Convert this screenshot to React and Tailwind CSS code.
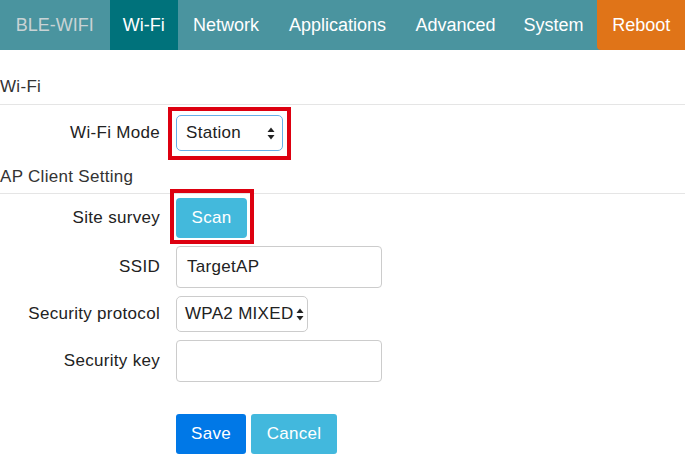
const tabs = [
  { label: "Wi-Fi", w: "w-[69px]", active: true },
  { label: "Network", w: "w-[96px]" },
  { label: "Applications", w: "w-[128px]" },
  { label: "Advanced", w: "w-[109px]" },
  { label: "System", w: "w-[88px]" },
];

function Arrows() {
  return (
    <svg width="8" height="13" viewBox="0 0 8 13" className="shrink-0">
      <path d="M4 0.5 L7.5 5 L0.5 5 Z" fill="#222" />
      <path d="M4 12.5 L7.5 8 L0.5 8 Z" fill="#222" />
    </svg>
  );
}

function Legend({ children, className }) {
  return (
    <div className={`border-b border-[#e5e5e5] text-[17px] leading-[20px] text-[#333] ${className}`}>
      {children}
    </div>
  );
}

function Row({ label, children, className = "" }) {
  return (
    <div className={`flex items-center ${className}`}>
      <div className="w-[160px] whitespace-nowrap text-right text-[#222]">{label}</div>
      <div className="ml-[16px] flex items-center">{children}</div>
    </div>
  );
}

function Marked({ children, box }) {
  return (
    <div className="relative">
      {children}
      <span className={`pointer-events-none absolute border-[4px] border-[#dd0010] ${box}`} />
    </div>
  );
}

export default function App() {
  return (
    <div className="h-[465px] w-[685px] overflow-hidden bg-white font-['Liberation_Sans',Arial,sans-serif]">
      <nav className="flex h-[50px] bg-[#4a949f] text-[18px] text-white">
        <div className="flex w-[110px] items-center justify-center text-[#c9d3d5]">BLE-WIFI</div>
        {tabs.map((t) => (
          <div
            key={t.label}
            className={`flex ${t.w} items-center justify-center ${t.active ? "bg-[#00727b]" : ""}`}
          >
            {t.label}
          </div>
        ))}
        <div className="flex w-[88px] items-center pl-[15px] rounded-bl-[4px] bg-[#e07418]">Reboot</div>
      </nav>

      <div className="text-[17px] tracking-[0.3px]">
        <Legend className="pt-[27px] pb-[7px]">Wi-Fi</Legend>

        <Row label="Wi-Fi Mode" className="mt-[10px]">
          <Marked box="-left-[8px] -right-[8px] -top-[8px] -bottom-[9px]">
            <div className="flex h-[36px] w-[107px] items-center justify-between rounded-[5px] border border-[#66afe9] pl-[9px] pr-[7px] text-[#222]">
              <span>Station</span>
              <Arrows />
            </div>
          </Marked>
        </Row>

        <Legend className="pt-[16px] pb-[6px]">AP Client Setting</Legend>

        <Row label="Site survey" className="mt-[4px]">
          <Marked box="-left-[6px] -right-[7px] -top-[9px] -bottom-[6px]">
            <button className="h-[40px] w-[71px] rounded-[4px] bg-[#43b9dc] text-white">Scan</button>
          </Marked>
        </Row>

        <Row label="SSID" className="mt-[8px]">
          <div className="flex h-[42px] w-[206px] items-center rounded-[4px] border border-[#cccccc] px-[10px] text-[#222]">
            TargetAP
          </div>
        </Row>

        <Row label="Security protocol" className="mt-[8px]">
          <div className="flex h-[36px] w-[132px] items-center justify-between rounded-[5px] border border-[#cccccc] pl-[8px] pr-[3px] text-[#222]">
            <span className="whitespace-nowrap">WPA2 MIXED</span>
            <Arrows />
          </div>
        </Row>

        <Row label="Security key" className="mt-[8px]">
          <div className="h-[42px] w-[206px] rounded-[4px] border border-[#cccccc]" />
        </Row>

        <div className="ml-[176px] mt-[32px] flex gap-[5px]">
          <button className="h-[40px] w-[70px] rounded-[3px] bg-[#0078e7] text-white">Save</button>
          <button className="h-[40px] w-[86px] rounded-[3px] bg-[#42b8dd] text-white">Cancel</button>
        </div>
      </div>
    </div>
  );
}
